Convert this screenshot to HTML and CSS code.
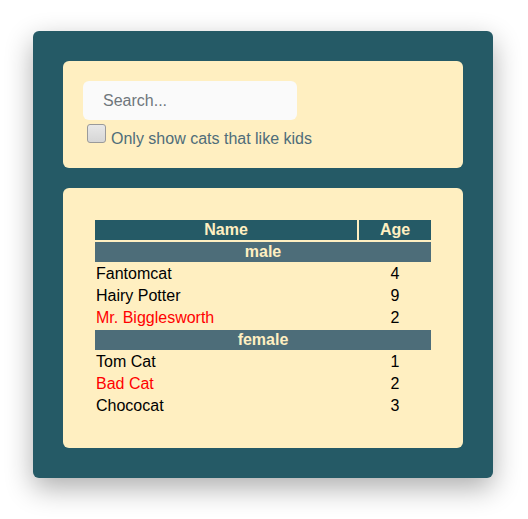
FILE: index.html
```html
<!DOCTYPE html>
<html>
<head>
<meta charset="utf-8">
<link rel="stylesheet" href="styles.css">
</head>
<body>
<div class="app">
  <div class="card search-card">
    <input class="search" type="text" placeholder="Search...">
    <label class="kids">
      <input type="checkbox" class="check">
      <span class="kids-text">Only show cats that like kids</span>
    </label>
  </div>
  <div class="card table-card">
    <table class="cats">
      <colgroup><col class="c-name"><col class="c-age"></colgroup>
      <thead>
        <tr><th>Name</th><th>Age</th></tr>
      </thead>
      <tbody>
        <tr class="cat-group"><th colspan="2">male</th></tr>
        <tr><td>Fantomcat</td><td class="age">4</td></tr>
        <tr><td>Hairy Potter</td><td class="age">9</td></tr>
        <tr><td class="no-kids">Mr. Bigglesworth</td><td class="age">2</td></tr>
        <tr class="cat-group"><th colspan="2">female</th></tr>
        <tr><td>Tom Cat</td><td class="age">1</td></tr>
        <tr><td class="no-kids">Bad Cat</td><td class="age">2</td></tr>
        <tr><td>Chococat</td><td class="age">3</td></tr>
      </tbody>
    </table>
  </div>
</div>
</body>
</html>
```
FILE: styles.css
```css
html, body {
  margin: 0;
  background: #ffffff;
}
body {
  padding: 31px 35px 41px 33px;
  font-family: "Liberation Sans", Arial, sans-serif;
  font-size: 16px;
}
.app {
  width: 400px;
  padding: 30px;
  background: #255a66;
  border-radius: 6px;
  box-shadow: 0 10px 28px rgba(0, 0, 0, 0.32);
  display: flex;
  flex-direction: column;
  gap: 20px;
}
.card {
  background: #ffefc1;
  border-radius: 6px;
}
.search-card {
  padding: 20px;
  display: flex;
  flex-direction: column;
  align-items: flex-start;
}
.search {
  box-sizing: border-box;
  width: 214px;
  height: 39px;
  border: none;
  outline: none;
  border-radius: 6px;
  background: #fafafa;
  padding: 0 20px;
  font-family: "Liberation Sans", Arial, sans-serif;
  font-size: 16px;
  color: #333;
}
.search::placeholder {
  color: #6f767c;
}
.kids {
  height: 28px;
  display: flex;
  align-items: flex-end;
  color: #4f6d7a;
  font-size: 16px;
}
.kids-text {
  line-height: 18px;
}
.check {
  appearance: none;
  -webkit-appearance: none;
  box-sizing: border-box;
  width: 19px;
  height: 19px;
  margin: 0 5px 5px 4px;
  border: 1px solid #9a9a9a;
  border-radius: 3px;
  background: linear-gradient(#e8e8e8, #d6d6d6);
}
.table-card {
  padding: 30px;
}
.cats {
  width: 340px;
  table-layout: fixed;
  border-spacing: 2px;
  font-size: 16px;
  line-height: 18px;
}
.c-name { width: 262px; }
.c-age { width: 72px; }
.cats th {
  padding: 1px;
  background: #255a66;
  color: #ffefc1;
  font-weight: bold;
  text-align: center;
}
.cats .cat-group th {
  background: #4d6d79;
}
.cats td {
  padding: 1px;
  color: #000;
}
.cats td.age {
  text-align: center;
}
.cats td.no-kids {
  color: #ff0000;
}
```
